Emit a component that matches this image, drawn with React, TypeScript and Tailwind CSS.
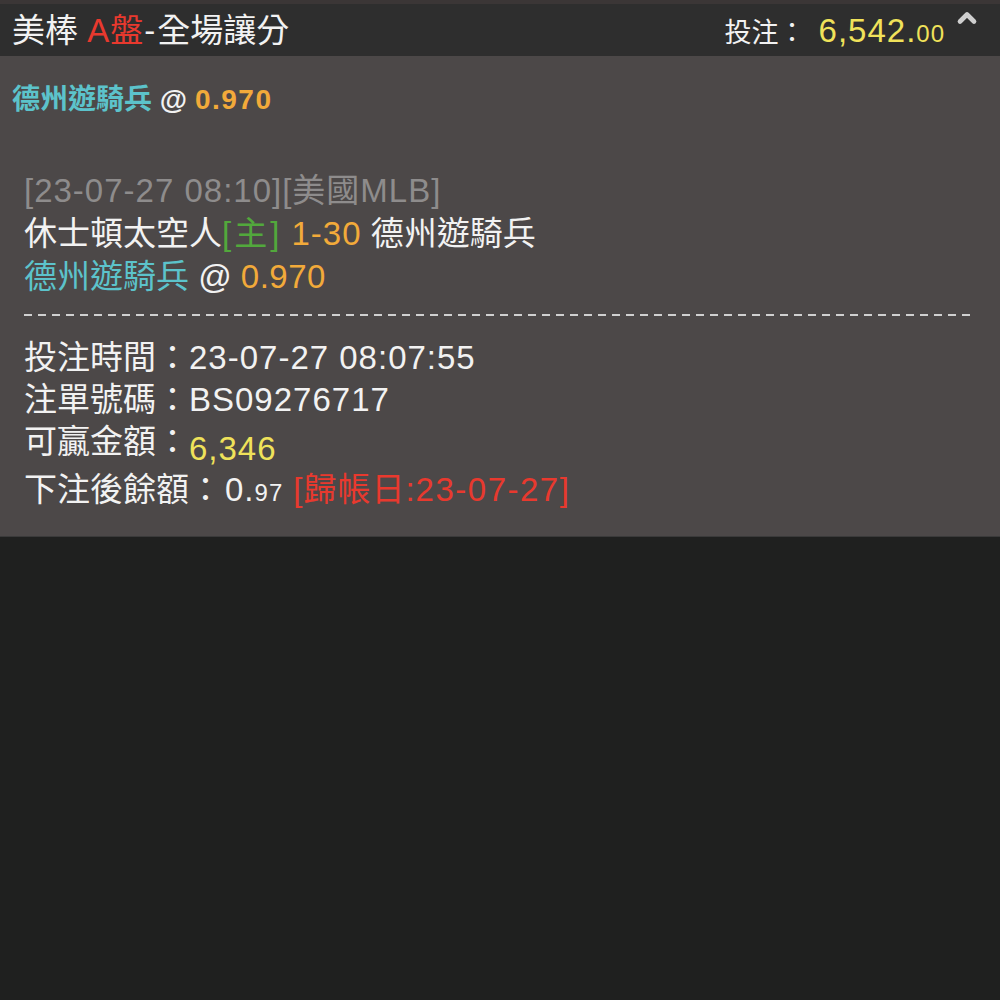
import { ChevronUp } from 'lucide-react';

const font = { fontFamily: '"Liberation Sans", "Noto Sans CJK TC", sans-serif' };

export default function App() {
  return (
    <div className="w-[1000px] h-[1000px] bg-[#1f201f] text-white overflow-hidden" style={font}>
      {/* top strip */}
      <div className="h-[4px] bg-[#3b3636]" />

      {/* header bar */}
      <div className="h-[52px] bg-[#2e2e2e] flex items-center justify-between pl-[12px] relative">
        <div className="text-[33px] leading-none text-[#f2f2f2]">
          美棒 <span className="text-[#e8392e] tracking-[1px]">A盤</span>
          <span className="tracking-[2px]">-</span>全場讓分
        </div>
        <div className="flex items-baseline mr-[55px] leading-none">
          <span className="text-[#f2f2f2] text-[27px]">投注：</span>
          <span className="text-[#f0e25a] text-[33px] ml-[13px] tracking-[1px]">6,542.</span>
          <span className="text-[#f0e25a] text-[24px] tracking-[1px]">00</span>
        </div>
        <ChevronUp className="absolute right-[19px] top-[0px] w-[28px] h-[28px] text-[#cfcfcf]" strokeWidth={4} />
      </div>

      {/* body */}
      <div className="bg-[#4c4848] h-[481px] border-b border-[#3a3a3a]">
        <div className="pl-[12px] pt-[30px] text-[28px] font-bold leading-none">
          <span className="text-[#5cc3cb]">德州遊騎兵</span>
          <span className="text-[#f2f2f2]"> @ </span>
          <span className="text-[#f2aa3a] tracking-[1.5px]">0.970</span>
        </div>

        <div className="px-[24px] pt-[55px]">
          <div className="text-[33px] leading-[43px]">
            <div className="text-[#8e8c8c] tracking-[1px]">[23-07-27 08:10][美國MLB]</div>
            <div className="text-[#f2f2f2]">
              休士頓太空人<span className="text-[#52a83c] tracking-[3px]">[主]</span>{' '}
              <span className="text-[#f2aa3a] tracking-[1px]">1-30</span> 德州遊騎兵
            </div>
            <div>
              <span className="text-[#5cc3cb]">德州遊騎兵</span>
              <span className="text-[#f2f2f2]"> @ </span>
              <span className="text-[#f2aa3a] tracking-[0.5px]">0.970</span>
            </div>
          </div>

          <div className="mt-[16px] h-[2px] bg-[repeating-linear-gradient(90deg,#d0d0d0_0_8px,transparent_8px_14px)]" />

          <div className="pt-[21px] text-[33px] leading-[42px] text-[#f2f2f2]">
            <div>
              投注時間：<span className="tracking-[1px]">23-07-27 08:07:55</span>
            </div>
            <div>
              注單號碼：<span className="tracking-[1px]">BS09276717</span>
            </div>
            <div className="flex items-start h-[48px]">
              <span>可贏金額：</span>
              <span className="text-[#efe25a] tracking-[1px] translate-y-[7px]">6,346</span>
            </div>
            <div className="flex items-baseline">
              <span>下注後餘額：</span>
              <span className="tracking-[1px] ml-[3px]">0.</span>
              <span className="text-[24px] tracking-[1px]">97</span>
              <span className="text-[#e8392e] ml-[10px] tracking-[1px]">
                [歸帳日:<span className="tracking-[1.5px]">23-07-27</span>]
              </span>
            </div>
          </div>
        </div>
      </div>
    </div>
  );
}
